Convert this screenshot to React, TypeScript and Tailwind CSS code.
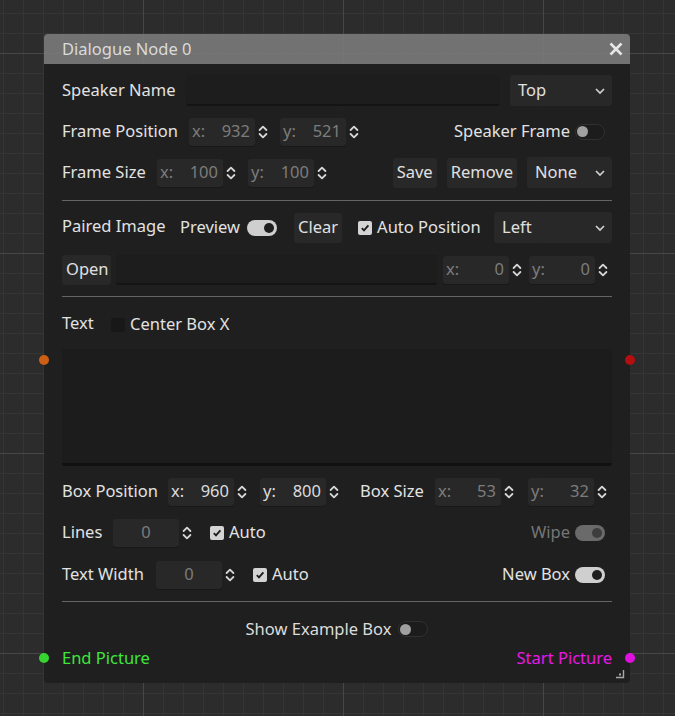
import type { ReactNode } from "react";

const Arrows = () => (
  <svg width="10" height="16" viewBox="0 0 10 16" className="ml-[3px] shrink-0">
    <path
      d="M1.6 6 L5 2.6 L8.4 6 M1.6 10 L5 13.4 L8.4 10"
      fill="none"
      stroke="#d6d6d6"
      strokeWidth="1.8"
      strokeLinecap="round"
      strokeLinejoin="round"
    />
  </svg>
);

const Spin = ({
  prefix,
  value,
  bright = false,
  center = false,
}: {
  prefix?: string;
  value: string;
  bright?: boolean;
  center?: boolean;
}) => (
  <div className="flex items-center shrink-0">
    <div className="flex h-[28px] w-[66px] items-center rounded-[3px] bg-[#282828] pl-[3px] pr-[5px] shadow-[0_1px_0_#181818]">
      {prefix && <span className={bright ? "text-[#dcdcdc]" : "text-[#7c7c7c]"}>{prefix}</span>}
      <span
        className={`flex-1 ${center ? "text-center pl-[2px]" : "text-right"} ${
          bright ? "text-[#dcdcdc]" : "text-[#7c7c7c]"
        }`}
      >
        {value}
      </span>
    </div>
    <Arrows />
  </div>
);

const Toggle = ({ on = false, disabled = false }: { on?: boolean; disabled?: boolean }) => {
  if (!on) {
    return (
      <div className="flex h-[16px] w-[30px] shrink-0 items-center rounded-full border border-[#303030] bg-[#1c1c1c] pl-[1px]">
        <div className="h-[11px] w-[11px] rounded-full bg-[#a0a0a0]" />
      </div>
    );
  }
  return (
    <div
      className={`flex h-[16px] w-[30px] shrink-0 items-center justify-end rounded-full pr-[3px] ${
        disabled ? "bg-[#6a6a6a]" : "bg-[#cfcfcf]"
      }`}
    >
      <div className={`h-[10px] w-[10px] rounded-full ${disabled ? "bg-[#3d3d3d]" : "bg-[#1e1e1e]"}`} />
    </div>
  );
};

const Check = ({ checked = false }: { checked?: boolean }) =>
  checked ? (
    <div className="flex h-[14px] w-[14px] shrink-0 items-center justify-center rounded-[2px] bg-[#d4d4d4]">
      <svg width="10" height="10" viewBox="0 0 10 10">
        <path d="M1.8 5.2 L4 7.4 L8.4 2.4" fill="none" stroke="#1e1e1e" strokeWidth="1.9" />
      </svg>
    </div>
  ) : (
    <div className="h-[14px] w-[14px] shrink-0 rounded-[2px] bg-[#181818]" />
  );

const Button = ({ children, className = "" }: { children: ReactNode; className?: string }) => (
  <div className={`flex h-[30px] shrink-0 items-center rounded-[3px] bg-[#282828] px-[4px] text-[#e0e0e0] ${className}`}>
    {children}
  </div>
);

const Dropdown = ({ label, className = "" }: { label: string; className?: string }) => (
  <div
    className={`flex h-[31px] shrink-0 items-center justify-between rounded-[3px] bg-[#282828] pl-[8px] pr-[6px] text-[#e0e0e0] ${className}`}
  >
    <span>{label}</span>
    <svg width="12" height="8" viewBox="0 0 12 8">
      <path d="M2 2 L6 6 L10 2" fill="none" stroke="#d0d0d0" strokeWidth="1.7" />
    </svg>
  </div>
);

const LineEdit = ({ className = "" }: { className?: string }) => (
  <div className={`h-[31px] rounded-[3px] border-b-2 border-[#141414] bg-[#1d1d1d] ${className}`} />
);

const Sep = ({ className = "" }: { className?: string }) => <div className={`h-px bg-[#646464] ${className}`} />;

export default function App() {
  return (
    <div className="h-[716px] w-full overflow-hidden bg-[#2c2c2c] bg-[image:linear-gradient(to_right,#474747_1px,transparent_1px),linear-gradient(to_bottom,#474747_1px,transparent_1px),linear-gradient(to_right,#353535_1px,transparent_1px),linear-gradient(to_bottom,#353535_1px,transparent_1px)] bg-[size:200px_200px,200px_200px,20px_20px,20px_20px] bg-[position:143px_53px,143px_53px,3px_13px,3px_13px] pl-[44px] pt-[34px] font-['Noto_Sans',sans-serif] text-[16.5px] leading-none text-[#e2e2e2]">
      <div className="w-[586px]">
        {/* title bar */}
        <div className="flex h-[30px] items-center justify-between rounded-t-[4px] bg-[#7a7a7a]/90 pl-[18px] pr-[6px]">
          <span className="text-[#dadada]">Dialogue Node 0</span>
          <svg width="16" height="16" viewBox="0 0 16 16">
            <path d="M2.5 2.5 L13.5 13.5 M13.5 2.5 L2.5 13.5" stroke="#e6e6e6" strokeWidth="2.6" />
          </svg>
        </div>

        {/* body */}
        <div className="relative rounded-b-[4px] bg-[#1f1f1f]/95 px-[18px] pt-[11px] pb-[13px]">
          <div className="absolute left-[-5px] top-[291px] h-[10px] w-[10px] rounded-full bg-[#cc5f14]" />
          <div className="absolute right-[-5px] top-[291px] h-[10px] w-[10px] rounded-full bg-[#b30f0f]" />
          <div className="absolute left-[-5px] top-[589px] h-[10px] w-[10px] rounded-full bg-[#35d42e]" />
          <div className="absolute right-[-5px] top-[589px] h-[10px] w-[10px] rounded-full bg-[#e010e0]" />

          {/* speaker name */}
          <div className="flex h-[31px] items-center">
            <span className="w-[124px] shrink-0">Speaker Name</span>
            <LineEdit className="flex-1" />
            <Dropdown label="Top" className="ml-[10px] w-[102px]" />
          </div>

          {/* frame position */}
          <div className="mt-[10px] flex h-[31px] items-center">
            <span className="w-[127px] shrink-0">Frame Position</span>
            <Spin prefix="x:" value="932" />
            <div className="ml-[12px]">
              <Spin prefix="y:" value="521" />
            </div>
            <span className="ml-auto">Speaker Frame</span>
            <div className="ml-[5px] mr-[7px]">
              <Toggle />
            </div>
          </div>

          {/* frame size */}
          <div className="mt-[10px] flex h-[31px] items-center">
            <span className="w-[95px] shrink-0">Frame Size</span>
            <Spin prefix="x:" value="100" />
            <div className="ml-[12px]">
              <Spin prefix="y:" value="100" />
            </div>
            <Button className="ml-auto">Save</Button>
            <Button className="ml-[10px]">Remove</Button>
            <Dropdown label="None" className="ml-[10px] w-[85px]" />
          </div>

          <Sep className="mt-[12px]" />

          {/* paired image */}
          <div className="mt-[11px] flex h-[31px] items-center">
            <span className="w-[118px] shrink-0 -translate-y-[1px]">Paired Image</span>
            <span>Preview</span>
            <div className="ml-[7px]">
              <Toggle on />
            </div>
            <Button className="ml-[17px]">Clear</Button>
            <div className="ml-[16px]">
              <Check checked />
            </div>
            <span className="ml-[5px]">Auto Position</span>
            <Dropdown label="Left" className="ml-auto w-[118px]" />
          </div>

          {/* open */}
          <div className="mt-[11px] flex h-[31px] items-center">
            <Button className="w-[49px] px-[4px]">Open</Button>
            <LineEdit className="ml-[5px] w-[321px]" />
            <div className="ml-[6px]">
              <Spin prefix="x:" value="0" />
            </div>
            <div className="ml-[7px]">
              <Spin prefix="y:" value="0" />
            </div>
          </div>

          <Sep className="mt-[11px]" />

          {/* text */}
          <div className="mt-[12px] flex h-[31px] items-center">
            <span className="w-[49px] shrink-0 -translate-y-[1px]">Text</span>
            <Check />
            <span className="ml-[5px]">Center Box X</span>
          </div>

          <div className="mt-[9px] h-[117px] rounded-[3px] border-b-[3px] border-[#111111] bg-[#1c1c1c]" />

          {/* box position / size */}
          <div className="mt-[10px] flex h-[31px] items-center">
            <span className="w-[106px] shrink-0">Box Position</span>
            <Spin prefix="x:" value="960" bright />
            <div className="ml-[13px]">
              <Spin prefix="y:" value="800" bright />
            </div>
            <span className="ml-[21px] w-[75px] shrink-0">Box Size</span>
            <Spin prefix="x:" value="53" />
            <div className="ml-[14px]">
              <Spin prefix="y:" value="32" />
            </div>
          </div>

          {/* lines */}
          <div className="mt-[10px] flex h-[31px] items-center">
            <span className="w-[51px] shrink-0">Lines</span>
            <Spin value="0" center />
            <div className="ml-[18px]">
              <Check checked />
            </div>
            <span className="ml-[5px]">Auto</span>
            <span className="ml-auto text-[#767676]">Wipe</span>
            <div className="ml-[5px] mr-[7px]">
              <Toggle on disabled />
            </div>
          </div>

          {/* text width */}
          <div className="mt-[11px] flex h-[31px] items-center">
            <span className="w-[94px] shrink-0">Text Width</span>
            <Spin value="0" center />
            <div className="ml-[18px]">
              <Check checked />
            </div>
            <span className="ml-[5px]">Auto</span>
            <span className="ml-auto">New Box</span>
            <div className="ml-[5px] mr-[7px]">
              <Toggle on />
            </div>
          </div>

          <Sep className="mt-[11px]" />

          <div className="mt-[15px] flex h-[24px] items-center justify-center gap-[7px]">
            <span className="text-[#dcdcdc]">Show Example Box</span>
            <Toggle />
          </div>

          <div className="mt-[5px] flex h-[24px] items-center justify-between">
            <span className="text-[#3ee63a]">End Picture</span>
            <span className="text-[#e619e6]">Start Picture</span>
          </div>

          <svg width="10" height="10" viewBox="0 0 10 10" className="absolute bottom-[4px] right-[5px]">
            <path d="M1 8.5 H8.5 V1" fill="none" stroke="#a8a8a8" strokeWidth="1.4" />
            <rect x="4" y="4.5" width="2" height="2" fill="#a8a8a8" />
          </svg>
        </div>
      </div>
    </div>
  );
}
